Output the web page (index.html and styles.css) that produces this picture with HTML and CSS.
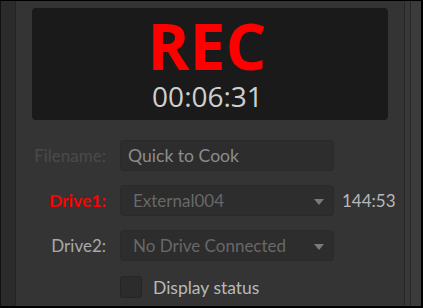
FILE: index.html
```html
<!DOCTYPE html>
<html>
<head>
<meta charset="utf-8">
<link rel="stylesheet" href="styles.css">
</head>
<body>
<div class="frame">
  <div class="side-left"></div>
  <div class="panel">
    <div class="display">
      <div class="rec">REC</div>
      <div class="tc">00:06:31</div>
    </div>
    <div class="form">
      <div class="label dim">Filename:</div>
      <div class="field"><span class="val name">Quick to Cook</span></div>
      <div class="extra"></div>

      <div class="label red">Drive1:</div>
      <div class="field"><span class="val">External004</span><span class="arrow"></span></div>
      <div class="extra">144:53</div>

      <div class="label">Drive2:</div>
      <div class="field"><span class="val">No Drive Connected</span><span class="arrow"></span></div>
      <div class="extra"></div>

      <div class="label"></div>
      <div class="check-row"><span class="box"></span><span class="check-label">Display status</span></div>
      <div class="extra"></div>
    </div>
  </div>
  <div class="side-right">
    <div class="strip-a"></div>
    <div class="strip-b"></div>
  </div>
</div>
</body>
</html>
```
FILE: styles.css
```css
html, body {
  margin: 0;
  padding: 0;
  background: #000;
}
.frame {
  width: 423px;
  height: 308px;
  box-sizing: border-box;
  border-top: 1px solid #000;
  border-bottom: 2px solid #000;
  border-left: 1px solid #111;
  border-right: 2px solid #000;
  display: flex;
  overflow: hidden;
  font-family: "Lato", "Open Sans", sans-serif;
}
.side-left {
  width: 14px;
  background: #2b2b2b;
  border-right: 1px solid #242424;
}
.panel {
  width: 388px;
  background: #343434;
  box-sizing: border-box;
  padding: 7px 16px 0 16px;
}
.display {
  height: 112px;
  box-sizing: border-box;
  background: #1a1a1a;
  border-radius: 4px;
  padding-top: 12px;
  display: flex;
  flex-direction: column;
  align-items: center;
}
.rec {
  font-family: "Open Sans", sans-serif;
  font-weight: 700;
  font-size: 64px;
  line-height: 52px;
  height: 52px;
  color: #ff0000;
  margin-left: -6px;
}
.tc {
  font-family: "Open Sans", sans-serif;
  font-size: 28px;
  line-height: 28px;
  color: #cfcfcf;
  margin-top: 10px;
  margin-left: -5px;
}
.form {
  margin-top: 20px;
  margin-left: -16px;
  display: grid;
  grid-template-columns: 90px 214px 60px;
  column-gap: 14px;
  row-gap: 14px;
  grid-auto-rows: 31px;
}
.form .extra {
  margin-left: -6px;
}
.label {
  text-align: right;
  font-size: 17px;
  color: #a9a9a9;
  display: flex;
  align-items: center;
  justify-content: flex-end;
}
.label.dim { color: #4a4a4a; }
.label.red { color: #ff0000; font-weight: 700; font-size: 17.5px; }
.field {
  background: #2d2d2d;
  border: 1px solid #2a2a2a;
  border-radius: 4px;
  box-sizing: border-box;
  display: flex;
  align-items: center;
  padding: 0 9px 0 12px;
}
.val {
  flex: 1;
  font-size: 17px;
  color: #686868;
}
.val.name {
  color: #8c8c8c;
  margin-left: -5px;
  font-size: 17.6px;
}
.arrow {
  width: 0;
  height: 0;
  border-left: 5px solid transparent;
  border-right: 5px solid transparent;
  border-top: 6px solid #7a7a7a;
  margin-top: 2px;
}
.extra {
  font-size: 17px;
  color: #b8b8b8;
  display: flex;
  align-items: center;
}
.check-row {
  display: flex;
  align-items: center;
  align-self: start;
  height: 24px;
  margin-top: 0;
}
.box {
  width: 22px;
  height: 22px;
  background: #2c2c2c;
  border: 1px solid #262626;
  box-sizing: border-box;
  border-radius: 3px;
}
.check-label {
  margin-left: 11px;
  font-size: 17.5px;
  color: #b9b9b9;
}
.side-right {
  flex: 1;
  display: flex;
}
.strip-a {
  width: 5px;
  background: #383838;
  border-left: 1px solid #262626;
  border-right: 1px solid #262626;
}
.strip-b {
  flex: 1;
  background: #3b3b3b;
}
```
